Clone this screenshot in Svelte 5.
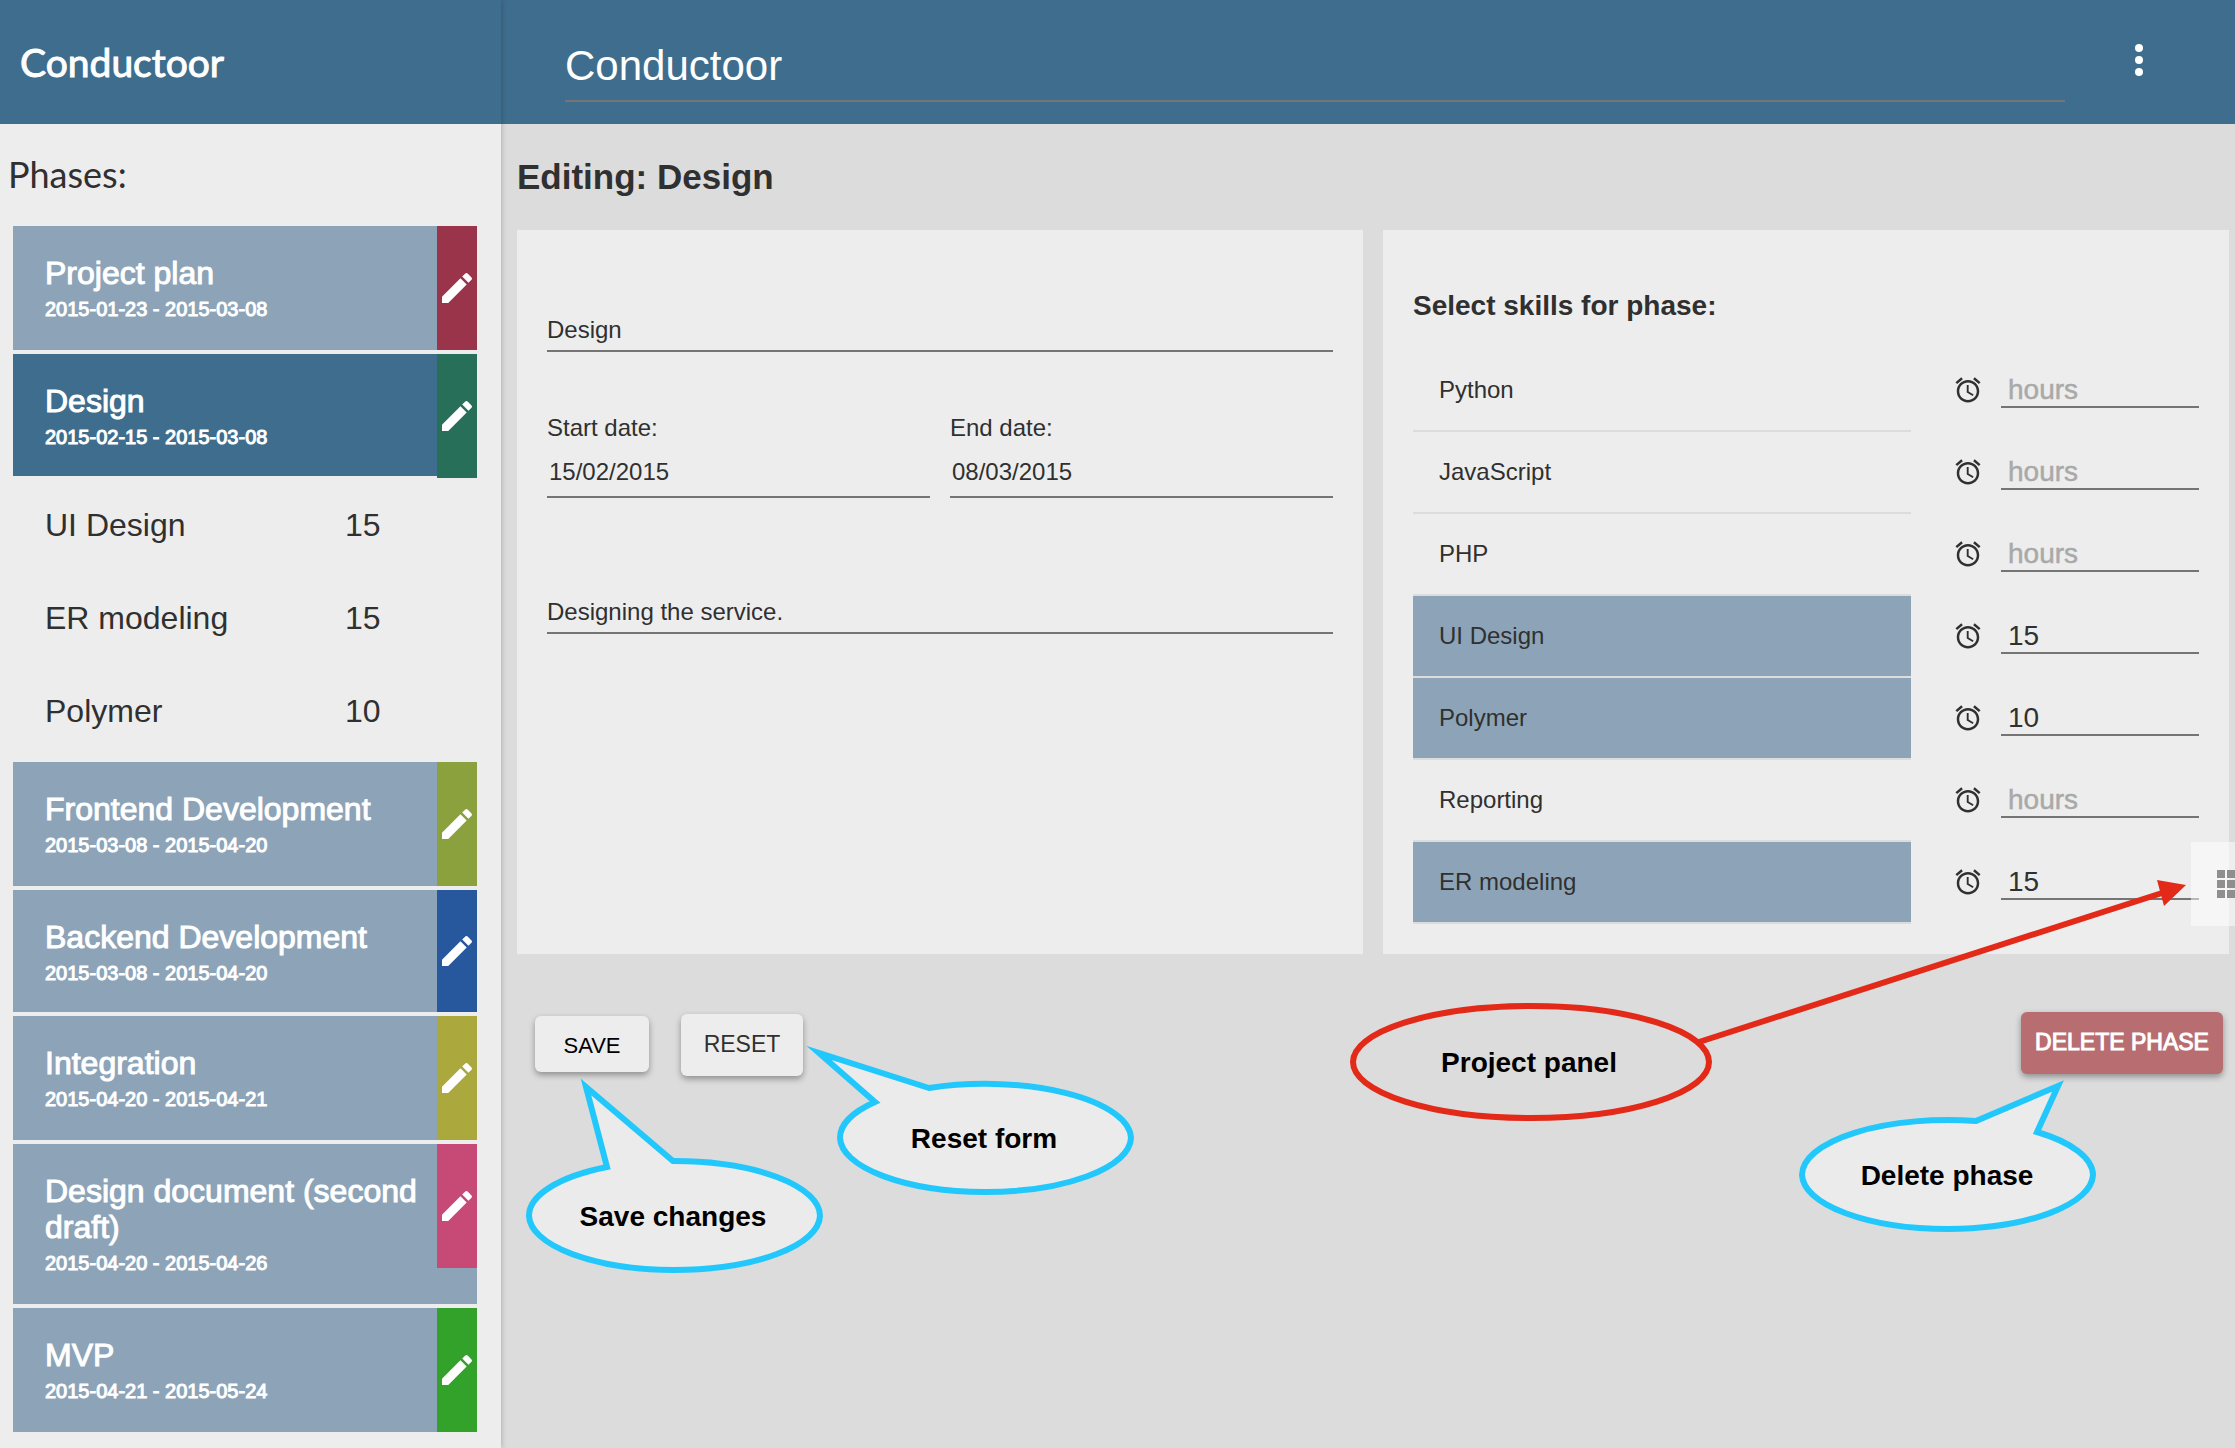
<script>
  const phases = [
    { name: 'Project plan', dates: '2015-01-23 - 2015-03-08', tone: 'crimson' },
    {
      name: 'Design',
      dates: '2015-02-15 - 2015-03-08',
      tone: 'forest',
      active: true,
      skills: [
        { name: 'UI Design', hours: 15 },
        { name: 'ER modeling', hours: 15 },
        { name: 'Polymer', hours: 10 }
      ]
    },
    { name: 'Frontend Development', dates: '2015-03-08 - 2015-04-20', tone: 'olive' },
    { name: 'Backend Development', dates: '2015-03-08 - 2015-04-20', tone: 'blue' },
    { name: 'Integration', dates: '2015-04-20 - 2015-04-21', tone: 'mustard' },
    { name: 'Design document (second draft)', dates: '2015-04-20 - 2015-04-26', tone: 'pink' },
    { name: 'MVP', dates: '2015-04-21 - 2015-05-24', tone: 'green' }
  ];

  let skills = $state([
    { name: 'Python', hours: '', on: false },
    { name: 'JavaScript', hours: '', on: false },
    { name: 'PHP', hours: '', on: false },
    { name: 'UI Design', hours: '15', on: true },
    { name: 'Polymer', hours: '10', on: true },
    { name: 'Reporting', hours: '', on: false },
    { name: 'ER modeling', hours: '15', on: true }
  ]);
</script>

<div class="app">
  <aside class="sidebar">
    <header class="brand"><h1>Conductoor</h1></header>
    <h2 class="phases-title">Phases:</h2>
    <ul class="phases">
      {#each phases as phase}
        <li>
          <div class="phase {phase.tone}" class:active={phase.active}>
            <a class="phase-link" href="#phase">
              <span class="phase-name">{phase.name}</span>
              <span class="phase-dates">{phase.dates}</span>
            </a>
            <button class="edit" type="button" aria-label="Edit {phase.name}">
              <svg viewBox="0 0 24 24" width="40" height="40" aria-hidden="true">
                <path d="M3 17.25V21h3.75L17.81 9.94l-3.75-3.75L3 17.25zM20.71 7.04a1 1 0 0 0 0-1.41l-2.34-2.34a1 1 0 0 0-1.41 0l-1.83 1.83 3.75 3.75 1.83-1.83z" />
              </svg>
            </button>
          </div>
          {#if phase.skills}
            <ul class="sub">
              {#each phase.skills as s}
                <li><span class="sub-name">{s.name}</span><span>{s.hours}</span></li>
              {/each}
            </ul>
          {/if}
        </li>
      {/each}
    </ul>
  </aside>

  <main class="main">
    <header class="topbar">
      <input class="project-name" type="text" value="Conductoor" aria-label="Project name" />
      <button class="more" type="button" aria-label="More options">
        <svg viewBox="0 0 24 24" width="48" height="48" aria-hidden="true">
          <circle cx="12" cy="6" r="2" /><circle cx="12" cy="12" r="2" /><circle cx="12" cy="18" r="2" />
        </svg>
      </button>
    </header>

    <h2 class="page-title">Editing: Design</h2>

    <div class="panels">
      <form class="panel">
        <input class="field name" type="text" value="Design" aria-label="Phase name" />
        <div class="dates">
          <label>Start date:<input class="field date" type="text" value="15/02/2015" /></label>
          <label>End date:<input class="field date" type="text" value="08/03/2015" /></label>
        </div>
        <input class="field" type="text" value="Designing the service." aria-label="Description" />
      </form>

      <section class="panel">
        <h3>Select skills for phase:</h3>
        {#each skills as skill}
          <div class="skill">
            <button
              class="skill-name"
              class:on={skill.on}
              type="button"
              aria-pressed={skill.on}
              onclick={() => (skill.on = !skill.on)}>{skill.name}</button>
            <svg class="alarm" viewBox="0 0 24 24" width="30" height="30" aria-hidden="true">
              <path d="M22 5.72l-4.6-3.86-1.29 1.53 4.6 3.86L22 5.72zM7.88 3.39L6.6 1.86 2 5.71l1.29 1.53 4.59-3.85zM12.5 8H11v6l4.75 2.85.75-1.23-4-2.37V8zM12 4c-4.97 0-9 4.03-9 9s4.02 9 9 9c4.97 0 9-4.03 9-9s-4.03-9-9-9zm0 16c-3.87 0-7-3.13-7-7s3.13-7 7-7 7 3.13 7 7-3.13 7-7 7z" />
            </svg>
            <input class="hours" type="text" placeholder="hours" aria-label="{skill.name} hours" bind:value={skill.hours} />
          </div>
        {/each}
      </section>
    </div>

    <div class="actions">
      <button class="btn save" type="button">SAVE</button>
      <button class="btn reset" type="button">RESET</button>
      <button class="btn delete" type="button">DELETE PHASE</button>
    </div>

    <svg class="notes notes-left" width="640" height="240" viewBox="510 1040 640 240">
      <g class="bubble">
        <path d="M607 1167L586 1087L673 1161A146 55 0 0 1 820 1216A146 55 0 0 1 674 1270A146 55 0 0 1 529 1216A146 55 0 0 1 607 1167Z" />
        <text x="673" y="1226">Save changes</text>
      </g>
      <g class="bubble">
        <path d="M875 1102L819 1053L929 1088A146 55 0 0 1 1131 1138A146 55 0 0 1 985 1192A146 55 0 0 1 840 1138A146 55 0 0 1 875 1102Z" />
        <text x="984" y="1148">Reset form</text>
      </g>
    </svg>
    <svg class="notes notes-right" width="895" height="380" viewBox="1340 860 895 380">
      <g class="bubble">
        <path d="M1976 1121L2058 1086L2037 1132A146 55 0 0 1 2093 1175A146 55 0 0 1 1948 1229A146 55 0 0 1 1802 1175A146 55 0 0 1 1976 1121Z" />
        <text x="1947" y="1185">Delete phase</text>
      </g>
      <g class="pointer">
        <ellipse cx="1531" cy="1062" rx="178" ry="56" />
        <path d="M1699 1042L2162 893" />
        <path class="head" d="M2186 885L2157 880L2164 906Z" />
        <text x="1529" y="1072">Project panel</text>
      </g>
    </svg>

    <button class="drawer" type="button" aria-label="Project panel">
      <svg width="18" height="28" viewBox="0 0 18 28" aria-hidden="true">
        <path d="M0 0h8v8H0zM10 0h8v8h-8zM0 10h8v8H0zM10 10h8v8h-8zM0 20h8v8H0zM10 20h8v8h-8z" />
      </svg>
    </button>
  </main>
</div>

<style>
  :global(body) {
    margin: 0;
    background: #dcdcdc;
  }
  .app {
    display: flex;
    min-height: 100vh;
    color: #303030;
    font-family: 'Liberation Sans', Arial, sans-serif;
    font-size: 24px;
  }
  button,
  input {
    font: inherit;
    color: inherit;
    margin: 0;
    padding: 0;
    border: 0;
    border-radius: 0;
    background: none;
    box-sizing: border-box;
  }
  h1,
  h2,
  h3,
  ul {
    margin: 0;
    padding: 0;
    list-style: none;
  }

  .sidebar {
    flex: 0 0 501px;
    background: #ededed;
    box-shadow: 0 0 6px rgba(0, 0, 0, 0.25);
    position: relative;
    z-index: 1;
  }
  .brand {
    display: flex;
    align-items: center;
    height: 124px;
    padding-left: 20px;
    box-sizing: border-box;
    background: #3f6d8e;
    color: #fff;
  }
  .brand h1,
  .phases-title {
    font-family: Lato, 'Open Sans', sans-serif;
    font-size: 39px;
    font-weight: 400;
    -webkit-text-stroke: 1px;
  }
  .phases-title {
    padding: 24px 8px 26px;
    font-size: 36px;
    line-height: 52px;
    -webkit-text-stroke: 0;
  }
  .phases {
    display: flex;
    flex-direction: column;
    gap: 4px;
    padding: 0 24px 16px 13px;
  }
  .phase {
    display: flex;
    align-items: flex-start;
    background: #8da4b8;
    color: #fff;
  }
  .phase.active {
    height: 122px;
    background: #3f6d8e;
  }
  .phase.blue {
    height: 122px;
  }
  .phase-link {
    flex: 1;
    padding: 29px 10px 23px 32px;
    color: inherit;
    text-decoration: none;
  }
  .phase-name,
  .phase-dates {
    display: block;
    font-size: 32px;
    line-height: 36px;
    -webkit-text-stroke: 1px;
  }
  .phase-dates {
    font-size: 20px;
  }
  .edit {
    display: flex;
    align-items: center;
    justify-content: center;
    width: 40px;
    height: 124px;
    fill: #fff;
  }
  .crimson .edit { background: #9a344a; }
  .forest .edit { background: #286f59; }
  .olive .edit { background: #8ba13d; }
  .blue .edit { height: 122px; background: #27589e; }
  .mustard .edit { background: #aba83d; }
  .pink .edit { background: #c74975; }
  .green .edit { background: #33a22b; }
  .sub {
    padding: 3px 0 0 32px;
    font-size: 32px;
  }
  .sub li {
    display: flex;
    line-height: 93px;
  }
  .sub-name {
    width: 300px;
  }

  .main {
    position: relative;
    flex: 1;
    min-width: 0;
  }
  .topbar {
    display: flex;
    align-items: flex-start;
    height: 124px;
    padding: 26px 72px 0 64px;
    box-sizing: border-box;
    background: #3f6d8e;
    color: #fff;
  }
  .project-name {
    flex: 1;
    min-width: 0;
    height: 76px;
    padding-top: 6px;
    border-bottom: 2px solid #757575;
    font-size: 42px;
  }
  .more {
    display: flex;
    margin: 10px 0 0 50px;
    fill: #fff;
  }
  .page-title {
    padding: 32px 16px 32px;
    font-size: 35px;
    line-height: 42px;
  }
  .panels {
    display: grid;
    grid-template-columns: 1fr 1fr;
    gap: 20px;
    padding: 0 6px 0 16px;
  }
  .panel {
    padding: 56px 30px 30px;
    background: #ededed;
  }
  .field {
    display: block;
    width: 100%;
    height: 42px;
    border-bottom: 2px solid #757575;
  }
  .name {
    margin-top: 24px;
  }
  .dates {
    display: grid;
    grid-template-columns: 1fr 1fr;
    gap: 20px;
    padding: 60px 0 94px;
  }
  .dates label {
    line-height: 32px;
  }
  .date {
    height: 54px;
    padding: 4px 2px 0;
  }
  .panel h3 {
    margin-bottom: 24px;
    font-size: 28px;
    line-height: 40px;
  }
  .skill {
    display: flex;
    align-items: flex-start;
  }
  .skill-name {
    flex: 1;
    height: 82px;
    padding-left: 26px;
    border-bottom: 2px solid #dcdcdc;
    text-align: left;
  }
  .skill-name.on {
    background: #8da4b8;
  }
  .alarm {
    margin: 25px 18px 0 42px;
    fill: #303030;
  }
  .hours {
    width: 198px;
    height: 38px;
    margin-top: 20px;
    padding: 4px 7px 0;
    border-bottom: 2px solid #757575;
    font-size: 28px;
  }
  .hours::placeholder {
    color: #a9a9a9;
    opacity: 1;
    -webkit-text-stroke: 0.5px;
  }

  .actions {
    display: flex;
    align-items: flex-start;
    padding: 58px 12px 0 34px;
  }
  .btn {
    border-radius: 6px;
    background: #ededed;
    box-shadow: 0 3px 6px rgba(0, 0, 0, 0.35);
    font-size: 23px;
  }
  .save {
    width: 114px;
    height: 56px;
    margin: 4px 32px 0 0;
    padding-top: 4px;
    color: #000;
    font-size: 22px;
  }
  .reset {
    width: 122px;
    height: 62px;
    margin-top: 2px;
    padding-bottom: 2px;
  }
  .delete {
    width: 202px;
    height: 62px;
    margin-left: auto;
    padding-bottom: 2px;
    background: #b86e70;
    color: #fff;
    -webkit-text-stroke: 1px;
  }

  /* Callouts drawn over the page */
  .notes {
    position: absolute;
    pointer-events: none;
    font-size: 28px;
    font-weight: 700;
    text-anchor: middle;
  }
  .notes-left {
    left: 9px;
    top: 1040px;
  }
  .notes-right {
    right: 0;
    top: 860px;
  }
  .bubble path {
    fill: #ebebeb;
    stroke: #22c8fb;
    stroke-width: 6;
    stroke-miterlimit: 12;
  }
  .notes text {
    fill: #000;
  }
  .pointer ellipse,
  .pointer path {
    fill: none;
    stroke: #e32a18;
    stroke-width: 6;
  }
  .pointer .head {
    fill: #e32a18;
    stroke: none;
  }
  .drawer {
    position: absolute;
    right: 0;
    top: 842px;
    display: flex;
    align-items: center;
    justify-content: flex-end;
    width: 44px;
    height: 84px;
    background: rgba(255, 255, 255, 0.5);
    fill: #8f8f8f;
  }
</style>
